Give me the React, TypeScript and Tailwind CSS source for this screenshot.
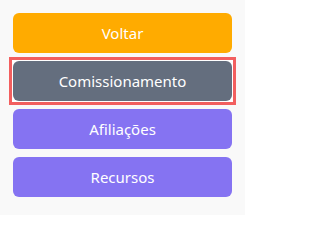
import React from 'react';

const buttons = [
  { label: 'Voltar', cls: 'bg-[#ffab00]', active: false },
  { label: 'Comissionamento', cls: 'bg-[#646e7e]', active: true },
  { label: 'Afiliações', cls: 'bg-[#8573f2]', active: false },
  { label: 'Recursos', cls: 'bg-[#8573f2]', active: false },
];

export default function App() {
  return (
    <div className="w-[245px] h-[215px] bg-[#f9f9f9] px-[13px] pt-[13px] flex flex-col gap-2 font-['Noto_Sans',sans-serif]">
      {buttons.map((b) => {
        const btn = (
          <button
            className={`h-10 w-full rounded-md text-white text-[15px] flex items-center justify-center ${b.cls}`}
          >
            {b.label}
          </button>
        );
        return b.active ? (
          <div key={b.label} className="-m-1 border-[3px] border-[#f25f5f] bg-white p-px">
            {btn}
          </div>
        ) : (
          <React.Fragment key={b.label}>{btn}</React.Fragment>
        );
      })}
    </div>
  );
}
